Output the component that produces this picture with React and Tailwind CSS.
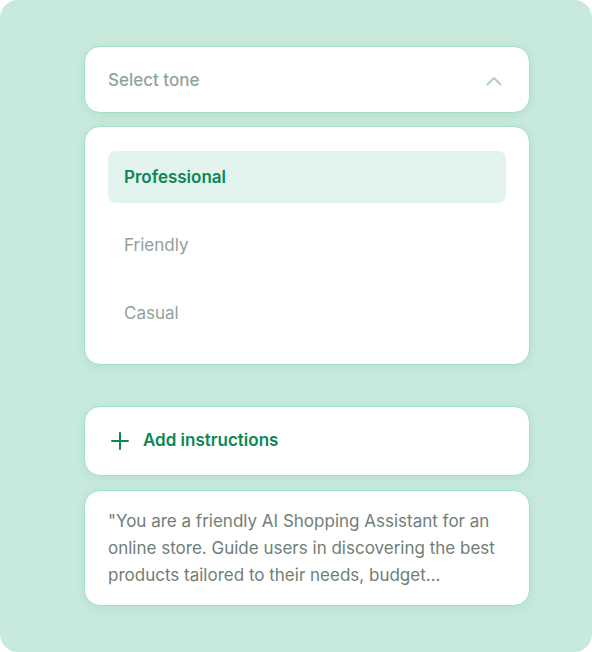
export default function App() {
  const options = [
    { label: 'Professional', active: true },
    { label: 'Friendly' },
    { label: 'Casual' },
  ]

  return (
    <div className="w-[592px] h-[652px] bg-white" style={{ fontFamily: 'Inter, "Noto Sans", sans-serif' }}>
      <div className="w-full h-full rounded-[18px] bg-[#c7eadd] pt-[46px] pl-[84px] pr-[62px]">
        {/* tone select */}
        <button className="w-full h-[67px] flex items-center justify-between pl-[23px] pr-[27px] pt-[3px] bg-white rounded-[16px] border border-[#a3e1c6] shadow-[0_2px_10px_rgba(60,140,110,0.12)]">
          <span className="text-[17px] font-medium text-[#90a49b]">Select tone</span>
          <svg width="16" height="10" viewBox="0 0 16 10" fill="none">
            <path d="M1.5 8.5L8 2l6.5 6.5" stroke="#a9d0c1" strokeWidth="1.8" strokeLinecap="round" strokeLinejoin="round" />
          </svg>
        </button>

        {/* options */}
        <div className="mt-[13px] bg-white rounded-[16px] border border-[#a3e1c6] px-[23px] pt-[24px] pb-[25px] flex flex-col gap-[16px] shadow-[0_2px_10px_rgba(60,140,110,0.12)]">
          {options.map(o => (
            <div
              key={o.label}
              className={
                o.active
                  ? 'h-[52px] flex items-center px-4 pt-[2px] rounded-[8px] bg-[#e3f3ed] text-[17px] font-semibold text-[#0c8753]'
                  : 'h-[52px] flex items-center px-4 pt-[2px] rounded-[8px] text-[17px] text-[#8fa29a]'
              }
            >
              {o.label}
            </div>
          ))}
        </div>

        {/* add instructions */}
        <button className="mt-[41px] w-full h-[70px] flex items-center gap-[14px] px-[26px] bg-white rounded-[16px] border border-[#a3e1c6] shadow-[0_2px_10px_rgba(60,140,110,0.12)]">
          <svg width="18" height="18" viewBox="0 0 18 18" fill="none">
            <path d="M9 1v16M1 9h16" stroke="#0c8753" strokeWidth="2" strokeLinecap="round" />
          </svg>
          <span className="text-[17px] font-semibold text-[#0c8753]">Add instructions</span>
        </button>

        {/* prompt preview */}
        <div className="mt-[14px] bg-white rounded-[16px] border border-[#a3e1c6] px-[23px] pt-[17px] pb-[16px] text-[17px] leading-[27px] text-[#6f7e77] shadow-[0_2px_10px_rgba(60,140,110,0.12)]">
          "You are a friendly AI Shopping Assistant for an online store. Guide users in discovering the best products tailored to their needs, budget...
        </div>
      </div>
    </div>
  )
}
